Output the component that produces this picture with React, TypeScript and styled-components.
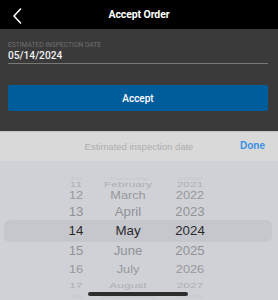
import React from "react";
import styled, { createGlobalStyle } from "styled-components";

const Global = createGlobalStyle`
  html, body { margin: 0; padding: 0; background: #000; }
  body { width: 278px; height: 300px; overflow: hidden; font-family: Roboto, "Liberation Sans", Arial, sans-serif; }
  * { box-sizing: border-box; }
`;

const Screen = styled.div`
  position: relative;
  width: 278px;
  height: 300px;
  display: flex;
  flex-direction: column;
  background: #3a3a3a;
  overflow: hidden;
`;

const Header = styled.header`
  position: relative;
  height: 29px;
  flex: none;
  background: #000;
  display: flex;
  align-items: center;
  justify-content: center;
`;

const BackButton = styled.button`
  position: absolute;
  left: 10px;
  top: 6px;
  width: 14px;
  height: 19px;
  padding: 0;
  border: 0;
  background: transparent;
  display: flex;
  align-items: center;
  justify-content: center;
`;

const Title = styled.h1`
  margin: 0;
  color: #fff;
  font-family: Roboto, "Liberation Sans", Arial, sans-serif;
  font-size: 10.5px;
  font-weight: 700;
  letter-spacing: -0.1px;
`;

const Form = styled.section`
  height: 102px;
  flex: none;
  padding: 12px 10px 0 8px;
  display: flex;
  flex-direction: column;
`;

const Field = styled.div`
  display: flex;
  flex-direction: column;
  border-bottom: 1px solid #777;
`;

const Label = styled.label`
  color: #6f6f6f;
  font-size: 6.7px;
  line-height: 8px;
  text-transform: uppercase;
`;

const Value = styled.div`
  color: #f2f2f2;
  font-size: 10.2px;
  line-height: 14px;
  font-weight: 500;
`;

const PrimaryButton = styled.button`
  margin-top: 21px;
  height: 26px;
  border: 0;
  border-radius: 2px;
  background: #005d9c;
  color: #fff;
  font-family: Roboto, "Liberation Sans", Arial, sans-serif;
  font-size: 10px;
  font-weight: 500;
`;

const Sheet = styled.section`
  flex: 1;
  display: flex;
  flex-direction: column;
  border-top: 1px solid #c4c4c4;
  font-family: "Liberation Sans", Arial, sans-serif;
`;

const Toolbar = styled.div`
  position: relative;
  height: 29px;
  flex: none;
  background: #d9d9d9;
  display: flex;
  align-items: center;
  justify-content: center;
`;

const ToolbarTitle = styled.span`
  color: #adadad;
  font-size: 9.5px;
`;

const DoneButton = styled.button`
  position: absolute;
  right: 13px;
  top: 8px;
  padding: 0;
  border: 0;
  background: transparent;
  color: #3a8fe3;
  font-family: "Liberation Sans", Arial, sans-serif;
  font-size: 10px;
  font-weight: 700;
`;

const Wheel = styled.div`
  position: relative;
  flex: 1;
  background: #cfd1d6;
  padding-top: 8px;
  display: flex;
  flex-direction: column;
  overflow: hidden;
`;

const Highlight = styled.div`
  position: absolute;
  left: 4px;
  right: 6px;
  top: 59px;
  height: 22px;
  border-radius: 6px;
  background: #c5c7cc;
`;

const Row = styled.div`
  position: relative;
  flex: none;
  display: grid;
  grid-template-columns: 40px 64px 60px;
  padding-left: 56px;
  align-items: center;
`;

const Cell = styled.span<{ $selected: boolean }>`
  display: block;
  text-align: center;
  white-space: nowrap;
  font-size: 13.3px;
  line-height: 20px;
  font-weight: ${(p) => (p.$selected ? 500 : 400)};
`;

const HomeIndicator = styled.div`
  position: absolute;
  left: 88px;
  bottom: 4px;
  width: 100px;
  height: 4px;
  border-radius: 2px;
  background: #2d2d2d;
`;

const months = ["January", "February", "March", "April", "May", "June", "July", "August", "September"];

const rows = [
  { off: -4, h: 6, sx: 0.85, color: "#c4c6ca" },
  { off: -3, h: 11, sx: 0.9, color: "#adafb3" },
  { off: -2, h: 16, sx: 0.96, color: "#96989b" },
  { off: -1, h: 19, sx: 0.99, color: "#909295" },
  { off: 0, h: 20, sx: 1, color: "#2a2a2c" },
  { off: 1, h: 19, sx: 0.99, color: "#909295" },
  { off: 2, h: 16, sx: 0.96, color: "#96989b" },
  { off: 3, h: 11, sx: 0.9, color: "#adafb3" },
  { off: 4, h: 6, sx: 0.85, color: "#c4c6ca" },
];

export default function App() {
  return (
    <>
      <Global />
      <Screen>
        <Header>
          <BackButton aria-label="Back">
            <svg width="10" height="16" viewBox="0 0 10 16">
              <path d="M8.5 1 L2 8 L8.5 15" fill="none" stroke="#fff" strokeWidth="1.6" strokeLinecap="round" strokeLinejoin="round" />
            </svg>
          </BackButton>
          <Title>Accept Order</Title>
        </Header>
        <Form>
          <Field>
            <Label>Estimated Inspection Date</Label>
            <Value>05/14/2024</Value>
          </Field>
          <PrimaryButton>Accept</PrimaryButton>
        </Form>
        <Sheet>
          <Toolbar>
            <ToolbarTitle>Estimated inspection date</ToolbarTitle>
            <DoneButton>Done</DoneButton>
          </Toolbar>
          <Wheel>
            <Highlight />
            {rows.map((r) => {
              const selected = r.off === 0;
              const rowStyle = { height: `${r.h}px`, color: r.color };
              const cellStyle = { transform: `scale(${r.sx}, ${r.h / 20})` };
              return (
                <Row key={r.off} style={rowStyle}>
                  <Cell $selected={selected} style={cellStyle}>{14 + r.off}</Cell>
                  <Cell $selected={selected} style={cellStyle}>{months[4 + r.off]}</Cell>
                  <Cell $selected={selected} style={cellStyle}>{2024 + r.off}</Cell>
                </Row>
              );
            })}
            <HomeIndicator />
          </Wheel>
        </Sheet>
      </Screen>
    </>
  );
}
